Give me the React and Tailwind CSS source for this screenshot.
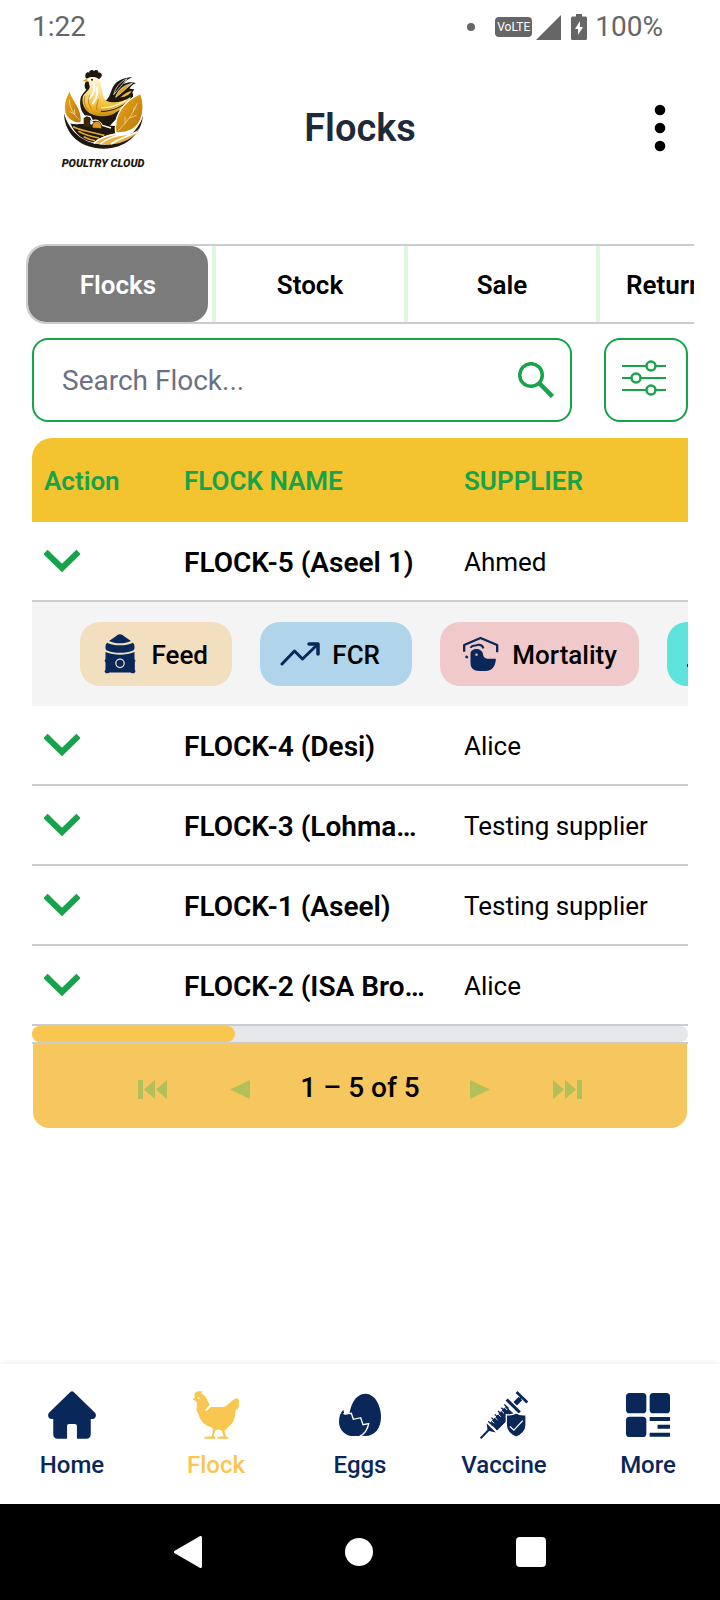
const navy = '#0a2759'

const TABS = ['Flocks', 'Stock', 'Sale', 'Return']

const FLOCKS = [
    { id: 5, name: 'FLOCK-5 (Aseel 1)', supplier: 'Ahmed', open: true },
    { id: 4, name: 'FLOCK-4 (Desi)', supplier: 'Alice' },
    { id: 3, name: 'FLOCK-3 (Lohma…', supplier: 'Testing supplier' },
    { id: 1, name: 'FLOCK-1 (Aseel)', supplier: 'Testing supplier' },
    { id: 2, name: 'FLOCK-2 (ISA Bro…', supplier: 'Alice' },
]

const Logo = () => (
    <svg viewBox="186 204 252 246" className="w-[84px] h-[82px]" aria-hidden="true">
        <defs>
            <linearGradient id="leaf" x1="0" y1="0" x2="1" y2="1">
                <stop offset="0" stopColor="#eba91f" />
                <stop offset="1" stopColor="#b87408" />
            </linearGradient>
            <linearGradient id="plume" x1="0" y1="0" x2="0" y2="1">
                <stop offset="0" stopColor="#fff8e4" />
                <stop offset="0.4" stopColor="#fbdf8c" />
                <stop offset="0.75" stopColor="#f2b92f" />
                <stop offset="1" stopColor="#c98a12" />
            </linearGradient>
        </defs>
        {/* bowl */}
        <path d="M195 340C197 408 250 446 314 446C378 446 428 404 432 345C418 396 374 433 316 434C262 434 212 402 195 340Z" fill="#1f180c" />
        {/* tail */}
        <path d="M318 304C336 290 334 270 346 254C360 238 380 232 400 232C386 238 378 244 374 252C386 246 398 246 411 249C400 254 394 260 392 266L406 268C402 274 398 278 402 282L402 290C398 298 394 302 390 312C380 330 366 342 352 356L330 380L290 372L262 350C244 336 240 310 246 290C254 276 264 270 270 258L290 240C306 262 296 290 318 304Z" fill="#1f180c" />
        <path d="M350 292C356 270 374 256 400 250C382 264 370 278 350 292Z" fill="#e0a022" stroke="#fff" strokeWidth="2" />
        <path d="M344 284C350 262 362 246 384 236C372 250 360 266 344 284Z" fill="#1f180c" stroke="#fff" strokeWidth="2" />
        <path d="M364 292C376 280 386 276 398 272C392 284 380 290 364 292Z" fill="#f3b93a" />
        {/* comb, wattle and beak */}
        <path d="M260 234C256 222 264 214 270 218C272 208 282 208 285 214C290 206 300 212 298 218C306 216 312 224 306 232L300 238C290 228 272 230 264 236Z" fill="#1f180c" />
        <path d="M262 244C254 252 256 268 264 270C272 266 272 252 268 244Z" fill="#1f180c" />
        <path d="M250 243L264 235L266 246Z" fill="#e5a21f" />
        {/* head and breast */}
        <path d="M266 238C276 228 294 230 302 244C312 262 306 288 322 302C344 312 370 306 396 290C384 316 370 326 352 336C334 352 300 352 276 342C256 332 246 308 252 288C262 274 276 268 272 252Z" fill="url(#plume)" />
        <path d="M284 250C292 268 280 286 268 298M294 262C298 284 290 300 280 312" stroke="#fff" strokeWidth="6" fill="none" />
        <path d="M258 288C252 304 258 320 268 330M272 286C266 302 268 314 278 326M298 298C296 312 290 320 294 330" stroke="#9a640a" strokeWidth="2" fill="none" />
        <path d="M306 334C330 336 362 324 382 308" stroke="#1f180c" strokeWidth="3" fill="none" />
        <path d="M306 322C330 326 356 316 380 302" stroke="#fff2c4" strokeWidth="4" fill="none" />
        <circle cx="279" cy="239" r="3" fill="#1f180c" />
        {/* field */}
        <path d="M214 370L350 378L350 400C320 404 300 418 288 428C256 424 226 402 214 370Z" fill="#1f180c" />
        <path d="M222 380C246 392 284 398 316 406M238 394C256 404 276 410 300 414M254 410C266 416 276 420 288 422" stroke="#e5a62c" strokeWidth="5" fill="none" />
        <path d="M284 430C304 408 330 400 372 402C396 402 414 396 424 380C410 412 376 430 330 434Z" fill="#e9b347" />
        <path d="M284 430C304 412 330 402 372 402M304 432C328 412 352 406 394 402M336 432C360 416 384 410 414 396" stroke="#fff" strokeWidth="5" fill="none" />
        <path d="M214 368C236 374 248 372 252 352L262 348L274 350L280 362C290 358 302 362 310 376L336 384" stroke="#fff" strokeWidth="4" fill="none" />
        <path d="M254 354L264 349L274 354V382L254 380Z" fill="#3a2808" />
        <path d="M280 384C278 370 286 364 294 364C304 364 308 374 308 386Z" fill="#dd9d22" stroke="#1f180c" strokeWidth="2" />
        {/* leaves */}
        <path d="M212 272C192 304 192 338 206 352C220 366 232 370 246 368C252 326 220 304 212 272Z" fill="url(#leaf)" stroke="#fff" strokeWidth="3" />
        <path d="M425 280C374 304 344 340 350 398C386 402 412 386 424 362C436 336 434 306 425 280Z" fill="url(#leaf)" stroke="#fff" strokeWidth="4" />
        <path d="M211 300C212 326 226 346 242 360M228 344L212 334M228 342L226 328M414 310C402 344 382 366 358 392M402 336L406 322M392 354L412 346M378 370L378 350" stroke="#fbe7b4" strokeWidth="2" fill="none" />
    </svg>
)

const StatusBar = () => (
    <div className="flex items-center h-[54px] pl-8 pr-[57px] text-[28px] leading-8 text-[#666]">
        <span>1:22</span>
        <span className="ml-auto size-2 rounded-full bg-[#666]"></span>
        <span className="flex justify-center ml-5 w-[37px] h-5 rounded-sm bg-[#666] text-white text-[12px] leading-5">VoLTE</span>
        <svg viewBox="0 0 26 26" className="ml-1 size-[26px]" fill="#666" aria-hidden="true">
            <path d="M25 1V26H0Z" />
        </svg>
        <svg viewBox="0 0 16 26" className="ml-[9px] w-4 h-[26px]" aria-hidden="true">
            <path d="M5 0h6v2.500h3.500q1.500 0 1.500 1.500v20.500q0 1.500-1.500 1.500h-13q-1.500 0-1.500-1.500v-20.500q0-1.500 1.500-1.500h3.500z" fill="#666" />
            <path d="M9 7L4 15h3v6l5-8h-3z" fill="#fff" />
        </svg>
        <span className="ml-2">100%</span>
    </div>
)

const Header = () => (
    <header className="grid grid-cols-3 items-start pt-[14px] h-[190px]">
        <div className="flex flex-col items-center w-[82px] ml-[62px]">
            <Logo />
            <span className="mt-2 text-[11px] leading-3 font-black italic text-[#1f180c] whitespace-nowrap">POULTRY CLOUD</span>
        </div>
        <h1 className="text-center text-[38px] leading-[48px] mt-9 font-semibold text-gray-800">Flocks</h1>
        <button aria-label="Menu" className="justify-self-end mt-9 mr-11 w-8 h-12 flex justify-center">
            <svg viewBox="0 0 12 48" className="w-3 h-12">
                <circle cx="6" cy="6" r="5.300" />
                <circle cx="6" cy="24" r="5.300" />
                <circle cx="6" cy="42" r="5.300" />
            </svg>
        </button>
    </header>
)

const Tabs = () => (
    <nav className="flex mx-[26px] h-20 overflow-hidden border-2 border-r-0 border-[#ccc] rounded-l-[20px] text-[26px] font-semibold">
        {TABS.map((tab, i) =>
            i === 0 ? (
                <button key={tab} className="shrink-0 w-[180px] mr-1 pt-[2px] rounded-[18px] bg-[#7b7b7b] text-white">{tab}</button>
            ) : (
                <button key={tab} className={i === 3 ? 'shrink-0 w-48 pt-[2px] pl-[26px] text-left border-l-4 border-[#dcf7e0]' : 'shrink-0 w-48 pt-[2px] border-l-4 border-[#dcf7e0]'}>{tab}</button>
            )
        )}
    </nav>
)

const SearchRow = () => (
    <div className="flex gap-8 mx-8 mt-[14px]">
        <label className="flex flex-1 items-center h-[84px] pl-7 pr-4 border-2 border-[#16a34a] rounded-2xl">
            <input type="text" aria-label="Search Flock" placeholder="Search Flock..." className="flex-1 min-w-0 pt-[2px] text-[28px] outline-none placeholder:text-gray-500" />
            <svg viewBox="0 0 36 36" className="size-9" fill="none" stroke="#16a34a" aria-hidden="true">
                <circle cx="13" cy="13" r="11.300" strokeWidth="3.500" />
                <path d="M21 21L34.500 34.500" strokeWidth="4.500" />
            </svg>
        </label>
        <button aria-label="Filter" className="flex items-center justify-center pb-1 pr-1 size-[84px] border-2 border-[#16a34a] rounded-2xl">
            <svg viewBox="0 0 44 36" className="w-11 h-9" fill="#fff" stroke="#16a34a" strokeWidth="2">
                <path d="M0 6H44M0 18H44M0 30H44" />
                <circle cx="29" cy="6" r="4.500" strokeWidth="2.500" />
                <circle cx="14" cy="18" r="4.500" strokeWidth="2.500" />
                <circle cx="29" cy="30" r="4.500" strokeWidth="2.500" />
            </svg>
        </button>
    </div>
)

const FeedIcon = () => (
    <svg viewBox="312 610 96 124" className="w-8 h-10" fill={navy} aria-hidden="true">
        <path d="M360 611C366 611 370 615 376 619L394 632C384 637 372 639 360 639C348 639 336 637 326 632L344 619C350 615 354 611 360 611Z" />
        <path d="M320 637C332 643 346 645 360 645C374 645 388 643 400 637C406 642 407 654 402 660C390 666 374 668 360 668C346 668 330 666 318 660C313 654 314 642 320 637Z" />
        <path d="M315 666C330 672 344 674 360 674C376 674 390 672 405 666V688L408 692L406 698V720L408 726L404 732H396L393 729H327L324 732H316L312 726L315 720V698L312 692L315 688Z" />
        <circle cx="360" cy="701" r="13" fill="none" stroke="#f2dfc0" strokeWidth="4" />
    </svg>
)

const TrendIcon = () => (
    <svg viewBox="0 0 40 26" className="w-10 h-[26px]" fill="none" stroke={navy} strokeWidth="3" strokeLinecap="round" strokeLinejoin="round" aria-hidden="true">
        <path d="M2 23L14.500 10L22.500 18L37 4" />
        <path d="M29 3H38V13" strokeWidth="3.500" />
    </svg>
)

const MortalityIcon = () => (
    <svg viewBox="305 619 110 108" className="w-[37px] h-9" aria-hidden="true">
        <g fill="none" stroke={navy} strokeWidth="7" strokeLinejoin="round">
            <path d="M311 666V646L360 625L410 646V668" />
            <path d="M315 680L322 684" />
            <path d="M330 654C336 644 346 650 350 646C360 644 366 648 369 656" strokeWidth="6" />
        </g>
        <path d="M330 672C330 654 366 652 368 676C370 684 374 687 382 687H406C406 704 398 724 374 724H356C340 724 330 716 330 700Z" fill={navy} />
        <circle cx="348" cy="675" r="3.500" fill="#f0cacb" />
    </svg>
)

const FlockActions = () => (
    <div className="flex gap-7 pl-12 py-5 w-full overflow-hidden bg-[#f4f4f4] text-[26px] font-medium">
        <button className="flex shrink-0 items-center justify-between w-[152px] h-16 pl-6 pr-6 rounded-[20px] bg-[#f2dfc0]">
            <FeedIcon />
            <span className="pt-[2px]">Feed</span>
        </button>
        <button className="flex shrink-0 items-center justify-between w-[152px] h-16 pl-5 pr-8 rounded-[20px] bg-[#b0d4ea]">
            <TrendIcon />
            <span className="pt-[2px]">FCR</span>
        </button>
        <button className="flex shrink-0 items-center justify-between w-[199px] h-16 pl-[22px] pr-[22px] rounded-[20px] bg-[#f0cacb]">
            <MortalityIcon />
            <span className="pt-[2px]">Mortality</span>
        </button>
        <button aria-label="More actions" className="flex shrink-0 items-center w-[152px] h-16 pl-5 rounded-[20px] bg-[#5ee3dc]">
            <svg viewBox="0 0 32 32" className="size-8" fill={navy} aria-hidden="true">
                <path d="M0 26H8L16 4L30 29H0Z" />
            </svg>
        </button>
    </div>
)

const FlockTable = () => (
    <table className="w-full table-fixed border-separate border-spacing-0 text-left">
        <thead className="text-[26px] text-[#16a34a]">
            <tr className="h-[84px] bg-[#f4c430]">
                <th className="w-[140px] pl-3 pt-[2px] font-semibold">Action</th>
                <th className="w-[280px] pl-3 pt-[2px] font-semibold">FLOCK NAME</th>
                <th className="pl-3 pt-[2px] font-semibold">SUPPLIER</th>
            </tr>
        </thead>
        {FLOCKS.map((flock) => (
            <tbody key={flock.id}>
                <tr className="h-20">
                    <td className="pl-3 border-b-2 border-[#ccc]">
                        <button aria-label="Toggle row" className="block">
                            <svg viewBox="0 0 36 24" className="w-9 h-6" fill="none" stroke="#16a34a" strokeWidth="6">
                                <path d="M1.500 3L18 19L34.500 3" />
                            </svg>
                        </button>
                    </td>
                    <td className="pl-3 pt-1 border-b-2 border-[#ccc] text-[28px] font-semibold whitespace-nowrap">{flock.name}</td>
                    <td className="pl-3 pt-[2px] border-b-2 border-[#ccc] text-[26px] whitespace-nowrap">{flock.supplier}</td>
                </tr>
                {flock.open && (
                    <tr>
                        <td colSpan={3}>
                            <FlockActions />
                        </td>
                    </tr>
                )}
            </tbody>
        ))}
    </table>
)

const Pagination = () => (
    <div className="flex items-center justify-center mx-px h-[84px] rounded-b-2xl bg-[#f6c75e] text-[#b3bf58]">
        <button aria-label="First page" className="w-[88px] flex justify-center pt-2 pl-[2px]">
            <svg viewBox="0 0 30 20" className="w-[30px] h-5" fill="currentColor"><path d="M0 0h5v19h-5zM17 0v19L6 9.500zM29 0v19L18 9.500z" /></svg>
        </button>
        <button aria-label="Previous page" className="w-[88px] flex justify-center pt-2">
            <svg viewBox="0 0 20 20" className="size-5" fill="currentColor"><path d="M20 0v19L0 9.500z" /></svg>
        </button>
        <span className="w-[152px] pt-1 text-center text-[28px] font-medium text-black">1 – 5 of 5</span>
        <button aria-label="Next page" className="w-[88px] flex justify-center pt-2">
            <svg viewBox="0 0 20 20" className="size-5" fill="currentColor"><path d="M0 0v19L20 9.500z" /></svg>
        </button>
        <button aria-label="Last page" className="w-[88px] flex justify-center pt-2 pr-[2px]">
            <svg viewBox="0 0 30 20" className="w-[30px] h-5" fill="currentColor"><path d="M1 0v19L12 9.500zM13 0v19L24 9.500zM25 0h5v19h-5z" /></svg>
        </button>
    </div>
)

const HomeIcon = () => (
    <svg viewBox="143 122 146 146" className="size-12" fill="currentColor" aria-hidden="true">
        <path d="M211 125Q216 120 221 125L286 188Q290 194 288 200Q285 208 277 207H273V254Q272 266 260 267H231V228Q230 222 225 222H207Q201 222 201 228V267H172Q160 266 159 254V207H154Q146 207 144 200Q142 194 146 188Z" />
    </svg>
)

const HenIcon = () => (
    <svg viewBox="577 122 146 146" className="size-12" fill="currentColor" aria-hidden="true">
        <path d="M585 130C590 122 600 122 609 124L604 129C614 134 622 143 625 153L631 164L616 181L622 182L635 171H672C686 168 694 150 714 143L720 151L719 172L709 182C708 204 706 214 692 228L682 237L676 244L681 261L688 262V267H655V262L673 260L668 243L657 238L647 243L643 260L648 262V267H615V262L637 260L641 242L639 234C615 228 600 212 596 190L591 181L592 157L587 152L579 148L585 143Z" />
        <circle cx="597" cy="143" r="3" fill="#fff" />
    </svg>
)

const EggsIcon = () => (
    <svg viewBox="18 18 144 144" className="size-12" fill="currentColor" aria-hidden="true">
        <path d="M106 26C136 26 153 64 153 96C153 130 134 153 106 153C78 153 58 130 58 96C58 64 76 26 106 26Z" />
        <path d="M40 74L44 90L64 84L70 103L92 98L99 119L117 116C114 132 104 146 90 153H62C40 148 27 130 27 110C27 94 32 82 40 74Z" />
        <path d="M40 86H56L64 85L70 103L92 98L99 119L116 116C113 134 103 147 88 155" fill="none" stroke="#fff" strokeWidth="4" />
    </svg>
)

const VaccineIcon = () => (
    <svg viewBox="359 122 146 146" className="size-12" fill="none" stroke="currentColor" aria-hidden="true">
        <path d="M361 266L386 240" strokeWidth="6" />
        <path d="M382 226L401 245L388 242L384 240Z" fill="currentColor" strokeWidth="4" />
        <path d="M391 219L437 170L460 191L411 241Z" fill="currentColor" strokeWidth="3" />
        <path d="M390 208L402 220M400 198L412 210M410 188L422 200M420 178L432 190M430 168L442 180" stroke="#fff" strokeWidth="3" />
        <path d="M384 214L398 228M394 203L408 217M404 193L418 207M414 183L428 197M424 173L438 187M433 163L446 175" strokeWidth="4" />
        <path d="M440 148L480 187" strokeWidth="9" />
        <path d="M466 161L482 145" strokeWidth="15" />
        <path d="M480 146L488 139" strokeWidth="5" />
        <path d="M470 125L503 157" strokeWidth="8" />
        <path d="M439 194C450 196 460 194 469 189C478 194 488 196 499 194V226C499 242 486 256 469 262C452 256 439 242 439 226Z" fill="currentColor" stroke="#fff" strokeWidth="4" />
        <path d="M450 230L462 241L489 212" stroke="#fff" strokeWidth="4" />
    </svg>
)

const MoreIcon = () => (
    <svg viewBox="791 122 146 146" className="size-12" fill="currentColor" aria-hidden="true">
        <rect x="797" y="128" width="62" height="62" rx="11" />
        <rect x="869" y="128" width="62" height="62" rx="11" />
        <rect x="797" y="200" width="62" height="62" rx="11" />
        <path d="M869 201h62v12h-62zM893 225h38v12h-38zM869 249h62v12h-62z" />
    </svg>
)

const LINKS = [
    { label: 'Home', Icon: HomeIcon },
    { label: 'Flock', Icon: HenIcon, active: true },
    { label: 'Eggs', Icon: EggsIcon },
    { label: 'Vaccine', Icon: VaccineIcon },
    { label: 'More', Icon: MoreIcon },
]

const BottomNav = () => (
    <nav className="grid grid-cols-5 h-[140px] pt-[27px] bg-white shadow-[0_-1px_6px_rgba(0,0,0,0.08)] text-2xl font-medium">
        {LINKS.map(({ label, Icon, active }) => (
            <a key={label} href="#" className={active ? 'flex flex-col items-center gap-[10px] text-[#f9c74f]' : 'flex flex-col items-center gap-[10px] text-[#0a2759]'}>
                <Icon />
                {label}
            </a>
        ))}
    </nav>
)

const SystemNav = () => (
    <div className="flex items-center justify-center gap-[143px] h-24 bg-black">
        <button aria-label="Back">
            <svg viewBox="0 0 28 32" className="w-7 h-8" fill="#fff" stroke="#fff" strokeWidth="3" strokeLinejoin="round"><path d="M26.500 1.500V30.500L1.500 16Z" /></svg>
        </button>
        <button aria-label="Home screen" className="size-7 rounded-full bg-white"></button>
        <button aria-label="Recent apps" className="size-[30px] rounded-sm bg-white"></button>
    </div>
)

const App = () => {
    return (
        <div className="flex flex-col min-h-screen bg-white text-black font-[Roboto,sans-serif]">
            <StatusBar />
            <Header />
            <Tabs />
            <SearchRow />
            <main className="mx-8 mt-4">
                <div className="overflow-hidden rounded-tl-[20px]">
                    <FlockTable />
                </div>
                <div className="border-b-2 border-[#ccc]">
                    <div className="h-4 rounded-full bg-gray-200">
                        <div className="h-4 w-[31%] rounded-full bg-[#f9c74f]"></div>
                    </div>
                </div>
                <Pagination />
            </main>
            <div className="mt-auto">
                <BottomNav />
                <SystemNav />
            </div>
        </div>
    )
}
export default App
